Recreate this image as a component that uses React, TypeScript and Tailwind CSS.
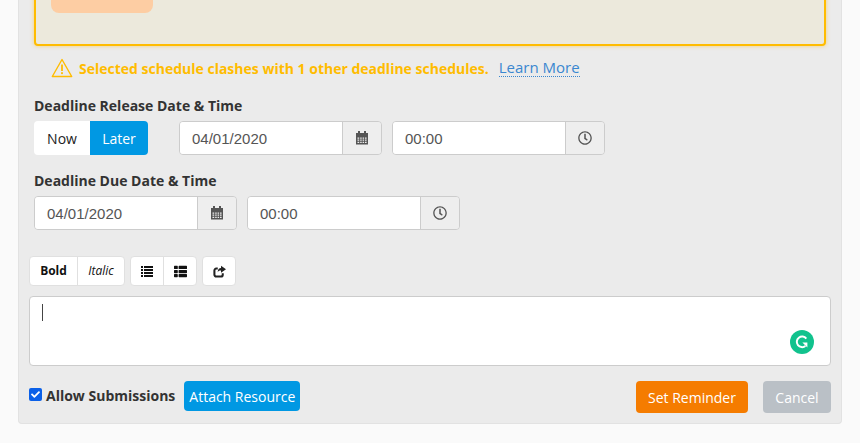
import { FaRegClock, FaThList, FaCheck } from 'react-icons/fa';

const font = "font-['Open_Sans',sans-serif]";

function CalendarIcon() {
  return (
    <svg width="14" height="14" viewBox="0 0 14 14" fill="#555">
      <rect x="3" y="0" width="2" height="3" />
      <rect x="9" y="0" width="2" height="3" />
      <path d="M1 2h12v3H1z" />
      <path
        fillRule="evenodd"
        d="M1 5h12v8.5H1zM2.5 6.5v1.2h1.7V6.5zM5.2 6.5v1.2h1.5V6.5zM7.6 6.5v1.2h1.5V6.5zM10 6.5v1.2h1.6V6.5zM2.5 8.6v1.2h1.7V8.6zM5.2 8.6v1.2h1.5V8.6zM7.6 8.6v1.2h1.5V8.6zM10 8.6v1.2h1.6V8.6zM2.5 10.7v1.3h1.7v-1.3zM5.2 10.7v1.3h1.5v-1.3zM7.6 10.7v1.3h1.5v-1.3zM10 10.7v1.3h1.6v-1.3z"
      />
    </svg>
  );
}

function DateField({ value, icon, width }: { value: string; icon: React.ReactNode; width: string }) {
  return (
    <div className={`flex h-[34px] ${width} rounded border border-[#cccccc] overflow-hidden`}>
      <div className="flex-1 bg-white flex items-center pl-[12px] pt-[2px] text-[15px] text-[#555555] font-['Liberation_Sans',sans-serif]">
        {value}
      </div>
      <div className="w-[39px] flex items-center justify-center border-l border-[#cccccc] bg-[#eeeeee]">
        {icon}
      </div>
    </div>
  );
}

function ListIcon() {
  return (
    <svg width="12" height="11" viewBox="0 0 12 11" fill="#111">
      <path d="M0 0h2v2H0zM3 0h9v2H3zM0 3h2v2H0zM3 3h9v2H3zM0 6h2v2H0zM3 6h9v2H3zM0 9h2v2H0zM3 9h9v2H3z" />
    </svg>
  );
}

function ShareIcon() {
  return (
    <svg width="13" height="13" viewBox="0 0 12 12" fill="none">
      <path d="M9 7.5v1.4a1.7 1.7 0 0 1-1.7 1.7H3a1.7 1.7 0 0 1-1.7-1.7V5A1.7 1.7 0 0 1 3 3.3h1.4" stroke="#222" strokeWidth="1.9" />
      <path d="M7.4 .6v2.2C5.6 2.9 4.4 4.2 4.3 6.6 5.2 5.3 6 5 7.4 5v2.2L12 3.9z" fill="#222" />
    </svg>
  );
}

export default function App() {
  return (
    <div className={`h-[443px] w-[860px] overflow-hidden bg-[#fafafa] ${font}`}>
      <div className="ml-[18px] w-[824px] h-[424px] bg-[#ebebeb] border border-t-0 border-[#e2e2e2] rounded-b px-[15px] flex flex-col">
        {/* warning box is cut off by the top of the picture */}
        <div className="-mt-[40px] h-[86px] shrink-0 w-[792px] rounded border-2 border-[#ffbc00] bg-[#ece9dc] shadow-[0_0_4px_rgba(255,188,0,0.5)] px-[15px] pt-[21px]">
          <div className="h-[30px] w-[102px] rounded-lg bg-[#fdcda3]" />
        </div>

        <div className="flex items-center mt-[12px] ml-[17px] h-[20px]">
          <svg width="22" height="20" viewBox="0 0 22 20" fill="none" className="mr-[6px]">
            <path d="M11 1.5 20.7 18.5H1.3z" stroke="#ffbc00" strokeWidth="1.4" strokeLinejoin="round" />
            <rect x="10.1" y="6.5" width="1.8" height="6.5" fill="#ffbc00" />
            <rect x="10.1" y="14.2" width="1.8" height="1.9" fill="#ffbc00" />
          </svg>
          <span className="text-[14px] font-bold text-[#ffbc00] whitespace-nowrap">Selected schedule clashes with 1 other deadline schedules.</span>
          <span className="ml-[10px] text-[15px] text-[#3a87d0] border-b border-dotted border-[#3a87d0] leading-[17px] whitespace-nowrap">Learn More</span>
        </div>

        <div className="mt-[19px] text-[14px] font-bold text-[#333333] leading-[18px]">Deadline Release Date &amp; Time</div>
        <div className="flex mt-[6px]">
          <div className="flex h-[34px] w-[114px] rounded overflow-hidden text-[14px]">
            <div className="w-[56px] bg-white text-[#222222] flex items-center justify-center">Now</div>
            <div className="w-[58px] bg-[#0098e3] text-white flex items-center justify-center">Later</div>
          </div>
          <div className="ml-[31px]">
            <DateField value="04/01/2020" icon={<CalendarIcon />} width="w-[203px]" />
          </div>
          <div className="ml-[10px]">
            <DateField value="00:00" icon={<FaRegClock size={14} color="#555" />} width="w-[213px]" />
          </div>
        </div>

        <div className="mt-[17px] text-[14px] font-bold text-[#333333] leading-[18px]">Deadline Due Date &amp; Time</div>
        <div className="flex mt-[6px]">
          <DateField value="04/01/2020" icon={<CalendarIcon />} width="w-[203px]" />
          <div className="ml-[10px]">
            <DateField value="00:00" icon={<FaRegClock size={14} color="#555" />} width="w-[213px]" />
          </div>
        </div>

        <div className="flex mt-[26px] -ml-[5px] h-[30px] text-[#111111]">
          <div className="flex rounded bg-white border border-[#e0e0e0] text-[12px]">
            <div className="w-[48px] flex items-center justify-center font-bold border-r border-[#e0e0e0]">Bold</div>
            <div className="w-[46px] flex items-center justify-center italic">Italic</div>
          </div>
          <div className="flex rounded bg-white border border-[#e0e0e0] ml-[5px]">
            <div className="w-[33px] flex items-center justify-center border-r border-[#e0e0e0]"><ListIcon /></div>
            <div className="w-[32px] flex items-center justify-center"><FaThList size={13} /></div>
          </div>
          <div className="w-[34px] flex items-center justify-center rounded bg-white border border-[#e0e0e0] ml-[5px]">
            <ShareIcon />
          </div>
        </div>

        <div className="relative mt-[10px] -ml-[5px] h-[70px] w-[802px] bg-white rounded border border-[#cccccc]">
          <div className="ml-[12px] mt-[7px] w-px h-[17px] bg-[#444444]" />
          <div className="absolute left-[760px] top-[33px] w-[24px] h-[24px] rounded-full bg-[#11c28d] flex items-center justify-center">
            <svg width="16" height="16" viewBox="0 0 16 16" fill="none">
              <path d="M12.3 4.6A5.3 5.3 0 1 0 11.4 12" stroke="#fff" strokeWidth="2" />
              <path d="M8.4 8.6h5v5z" fill="#fff" />
            </svg>
          </div>
        </div>

        <div className="flex items-center mt-[15px] -ml-[5px] w-[802px]">
          <div className="mb-[6px] flex items-center justify-center w-[13px] h-[13px] rounded-[2px] bg-[#0b60e8] text-white">
            <FaCheck size={9} />
          </div>
          <span className="mb-[4px] ml-[4px] text-[14px] font-bold text-[#333333] whitespace-nowrap">Allow Submissions</span>
          <div className="ml-[9px] mb-[2px] h-[30px] w-[116px] rounded bg-[#0098e3] text-white text-[14px] flex items-center justify-center whitespace-nowrap">Attach Resource</div>
          <div className="ml-auto h-[32px] w-[112px] rounded bg-[#f57c00] text-white text-[14px] flex items-center justify-center">Set Reminder</div>
          <div className="ml-[15px] h-[32px] w-[68px] rounded bg-[#bac0c6] text-white text-[14px] flex items-center justify-center">Cancel</div>
        </div>
      </div>
    </div>
  );
}
